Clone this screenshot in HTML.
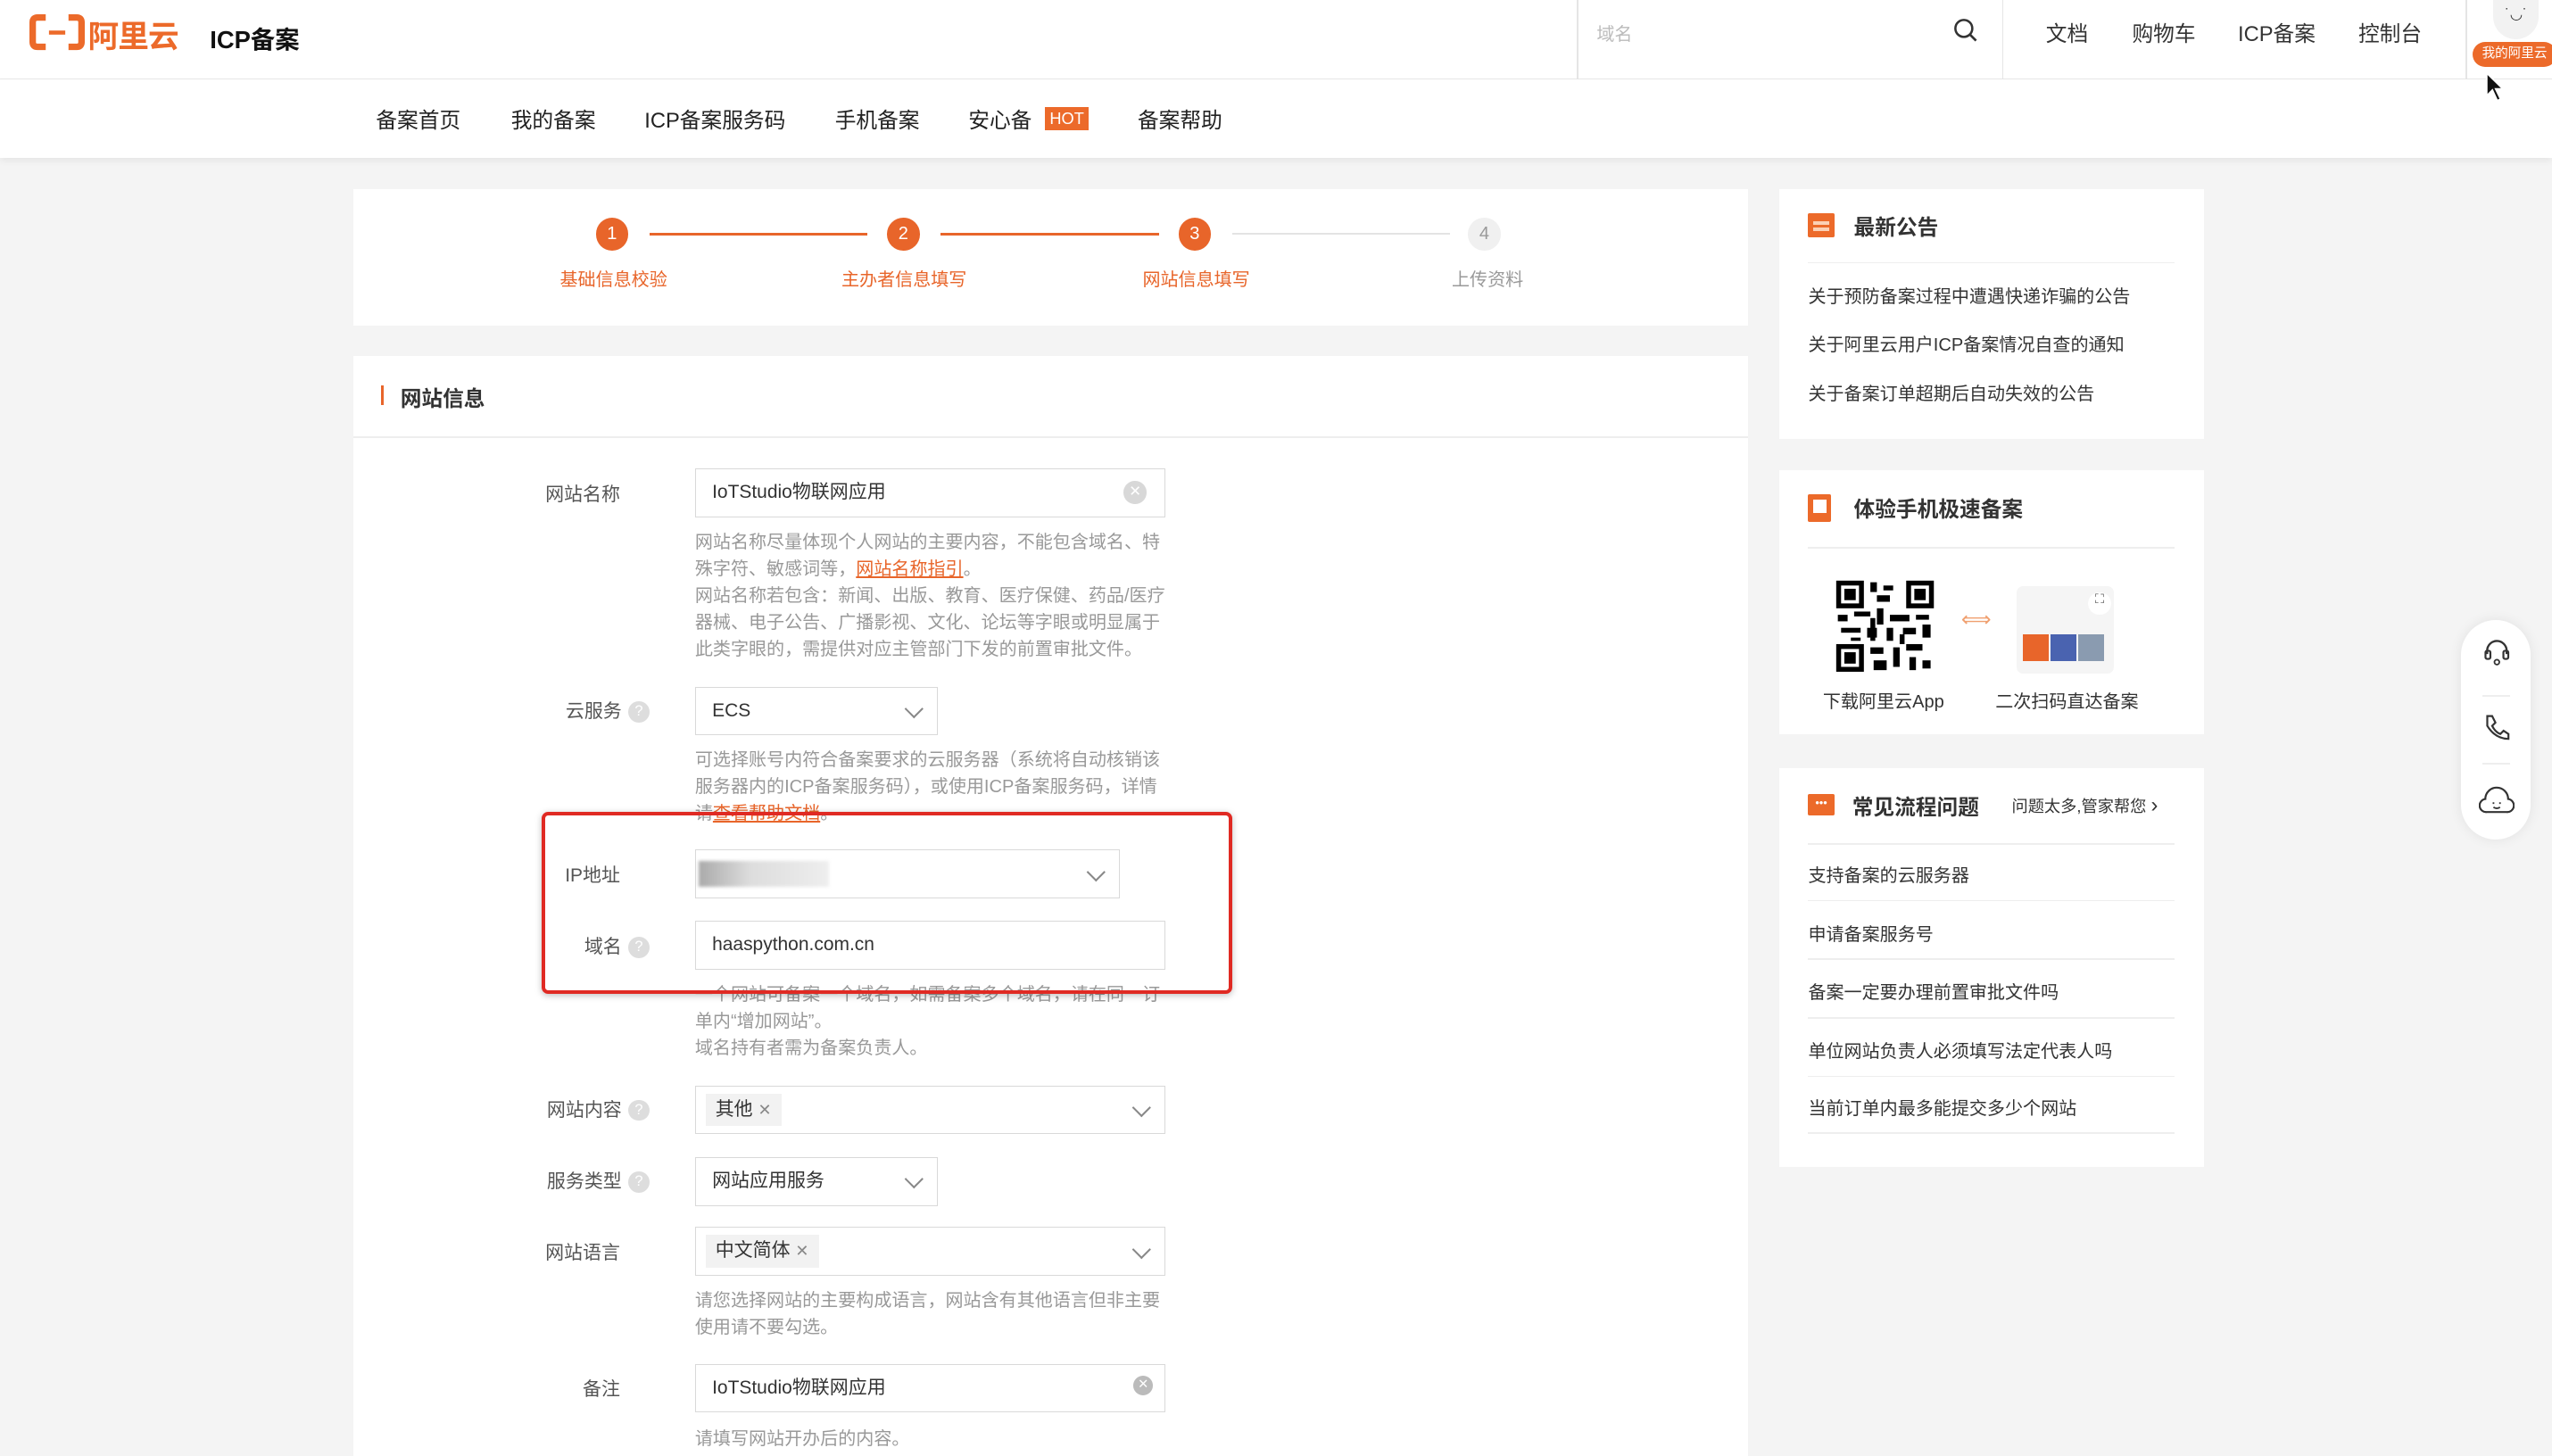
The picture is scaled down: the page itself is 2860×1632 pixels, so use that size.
<!DOCTYPE html>
<html><head><meta charset="utf-8"><style>
*{box-sizing:border-box;margin:0;padding:0}
html,body{width:2860px;height:1632px;overflow:hidden;background:#f4f4f4}
#w{zoom:1.824;width:1568px;height:895px;position:relative;font-family:"Liberation Sans","Noto Sans CJK SC",sans-serif;color:#333;overflow:hidden}
.a{position:absolute;white-space:nowrap}
.or{color:#e8652a}
.card{position:absolute;background:#fff}
.lbl{position:absolute;font-size:11.5px;color:#555;text-align:right;width:120px}
.inp{position:absolute;border:1px solid #d9d9d9;background:#fff;height:30px;font-size:11.5px;color:#333;padding:0 10px;line-height:28px}
.help{position:absolute;font-size:11px;color:#999;line-height:16.5px}
.q{display:inline-block;width:13px;height:13px;border-radius:50%;background:#ddd;color:#fff;font-size:9px;text-align:center;line-height:13px;vertical-align:1px;margin-left:4px}
.chev{position:absolute;right:10px;top:9px;width:8px;height:8px;border-right:1.3px solid #888;border-bottom:1.3px solid #888;transform:rotate(45deg)}
.tag{display:inline-block;background:#f2f2f2;padding:0 6px;height:20px;line-height:20px;font-size:11.5px;margin-top:3px}
.sec{font-size:14px;font-weight:bold;color:#333}
.li{position:absolute;left:18px;font-size:11px;color:#333}
.hr{position:absolute;left:18px;right:18px;height:1px;background:#eee}
</style></head><body><div id="w">
<div class="a" style="left:0;top:0;width:1568px;height:49px;background:#fff;border-bottom:1px solid #e8e8e8"></div>
<svg class="a" style="left:18px;top:9px" width="34" height="22" viewBox="0 0 34 22"><path d="M10 2H5Q2 2 2 5V17Q2 20 5 20H10M24 2H29Q32 2 32 5V17Q32 20 29 20H24" fill="none" stroke="#ec6a2a" stroke-width="4"/><rect x="12" y="10" width="10" height="2.5" fill="#ec6a2a"/></svg>
<div class="a" style="left:54px;top:7px;font-size:19px;color:#ec6a2a;font-weight:bold;letter-spacing:-0.5px">阿里云</div>
<div class="a" style="left:129px;top:12px;font-size:15px;font-weight:bold;color:#111">ICP备案</div>
<div class="a" style="left:969px;top:0;width:1px;height:49px;background:#e5e5e5"></div>
<div class="a" style="left:981px;top:12px;font-size:11px;color:#bbb">域名</div>
<svg class="a" style="left:1200px;top:11px" width="15" height="15"><circle cx="6.5" cy="6.5" r="5.2" fill="none" stroke="#333" stroke-width="1.4"/><path d="M10.3 10.3L14 14" stroke="#333" stroke-width="1.5"/></svg>
<div class="a" style="left:1230px;top:0;width:1px;height:49px;background:#e5e5e5"></div>
<div class="a" style="left:1257px;top:10px;font-size:13px;color:#333">文档</div>
<div class="a" style="left:1310px;top:10px;font-size:13px;color:#333">购物车</div>
<div class="a" style="left:1375px;top:10px;font-size:13px;color:#333">ICP备案</div>
<div class="a" style="left:1449px;top:10px;font-size:13px;color:#333">控制台</div>
<div class="a" style="left:1515px;top:0;width:1px;height:49px;background:#e5e5e5"></div>
<div class="a" style="left:1532px;top:0;width:28px;height:24px;border-radius:0 0 14px 14px;background:#f2f2f2;font-size:9px;text-align:center;line-height:18px;color:#333">˙◡˙</div>
<div class="a" style="left:1519px;top:26px;width:52px;height:15px;border-radius:8px;background:#ec6a2a;color:#fff;font-size:8px;line-height:15px;padding-left:6px">我的阿里云</div>
<div class="a" style="left:0;top:49px;width:1568px;height:48px;background:#fff;box-shadow:0 2px 4px rgba(0,0,0,.06)"></div>
<svg class="a" style="left:1527px;top:44px;z-index:2" width="13" height="20"><path d="M1 1V15L4.5 11.5L7.5 18L9.5 17L6.5 10.8H11Z" fill="#111" stroke="#fff" stroke-width="1"/></svg>
<div class="a" style="left:231px;top:63px;font-size:13px;color:#222">备案首页</div>
<div class="a" style="left:314px;top:63px;font-size:13px;color:#222">我的备案</div>
<div class="a" style="left:396px;top:63px;font-size:13px;color:#222">ICP备案服务码</div>
<div class="a" style="left:513px;top:63px;font-size:13px;color:#222">手机备案</div>
<div class="a" style="left:595px;top:63px;font-size:13px;color:#222">安心备</div>
<div class="a" style="left:642px;top:66px;width:27px;height:14px;background:#ec6a2a;color:#fff;font-size:10px;line-height:14px;text-align:center">HOT</div>
<div class="a" style="left:699px;top:63px;font-size:13px;color:#222">备案帮助</div>
<div class="card" style="left:217px;top:116px;width:857px;height:84px"></div>
<div class="a" style="left:399px;top:143px;width:134px;height:1.5px;background:#e8652a"></div>
<div class="a" style="left:578px;top:143px;width:134px;height:1.5px;background:#e8652a"></div>
<div class="a" style="left:757px;top:143px;width:134px;height:1px;background:#e3e3e3"></div>
<div class="a" style="left:366px;top:134px;width:20px;height:20px;border-radius:50%;background:#e8652a;color:#fff;font-size:11px;text-align:center;line-height:20px">1</div>
<div class="a" style="left:545px;top:134px;width:20px;height:20px;border-radius:50%;background:#e8652a;color:#fff;font-size:11px;text-align:center;line-height:20px">2</div>
<div class="a" style="left:724px;top:134px;width:20px;height:20px;border-radius:50%;background:#e8652a;color:#fff;font-size:11px;text-align:center;line-height:20px">3</div>
<div class="a" style="left:902px;top:134px;width:20px;height:20px;border-radius:50%;background:#f0f0f0;color:#999;font-size:11px;text-align:center;line-height:20px">4</div>
<div class="a or" style="left:344px;top:163px;font-size:11px">基础信息校验</div>
<div class="a or" style="left:517px;top:163px;font-size:11px">主办者信息填写</div>
<div class="a or" style="left:702px;top:163px;font-size:11px">网站信息填写</div>
<div class="a" style="left:892px;top:163px;font-size:11px;color:#999">上传资料</div>
<div class="card" style="left:217px;top:219px;width:857px;height:690px"></div>
<div class="a" style="left:234px;top:237px;width:2px;height:12px;background:#e8652a"></div>
<div class="a sec" style="left:246px;top:234px;font-size:13px">网站信息</div>
<div class="a" style="left:217px;top:268px;width:857px;height:1px;background:#eee"></div>
<div class="lbl" style="left:261px;top:295px">网站名称</div>
<div class="inp" style="left:427px;top:288px;width:289px">IoTStudio物联网应用<span style="position:absolute;right:11px;top:7px;width:14px;height:14px;border-radius:50%;background:#d8d8d8;color:#fff;font-size:9px;line-height:14px;text-align:center">✕</span></div>
<div class="help" style="left:427px;top:325px;width:292px">网站名称尽量体现个人网站的主要内容，不能包含域名、特殊字符、敏感词等，<span class="or" style="text-decoration:underline">网站名称指引</span>。<br>网站名称若包含：新闻、出版、教育、医疗保健、药品/医疗器械、电子公告、广播影视、文化、论坛等字眼或明显属于此类字眼的，需提供对应主管部门下发的前置审批文件。</div>
<div class="lbl" style="left:279px;top:428px">云服务<span class="q">?</span></div>
<div class="inp" style="left:427px;top:422px;width:149px">ECS<span class="chev"></span></div>
<div class="help" style="left:427px;top:459px;width:292px">可选择账号内符合备案要求的云服务器（系统将自动核销该服务器内的ICP备案服务码），或使用ICP备案服务码，详情请<span class="or" style="text-decoration:underline">查看帮助文档</span>。</div>
<div class="lbl" style="left:261px;top:529px">IP地址</div>
<div class="inp" style="left:427px;top:522px;width:261px;padding-left:2px"><span style="display:inline-block;width:80px;height:16px;background:linear-gradient(90deg,#aaa,#ddd 40%,#eee);vertical-align:middle;filter:blur(1px)"></span><span class="chev"></span></div>
<div class="lbl" style="left:279px;top:573px">域名<span class="q">?</span></div>
<div class="inp" style="left:427px;top:566px;width:289px">haaspython.com.cn</div>
<div class="help" style="left:427px;top:603px;width:292px">一个网站可备案一个域名，如需备案多个域名，请在同一订单内“增加网站”。<br>域名持有者需为备案负责人。</div>
<div class="a" style="left:333px;top:499px;width:424px;height:112px;border:2.5px solid #e02a23;border-radius:4px;box-shadow:0 1px 4px rgba(0,0,0,.25)"></div>
<div class="lbl" style="left:279px;top:673px">网站内容<span class="q">?</span></div>
<div class="inp" style="left:427px;top:667px;width:289px;padding-left:6px"><span class="tag">其他 <span style="color:#888;font-size:10px">✕</span></span><span class="chev"></span></div>
<div class="lbl" style="left:279px;top:717px">服务类型<span class="q">?</span></div>
<div class="inp" style="left:427px;top:711px;width:149px">网站应用服务<span class="chev"></span></div>
<div class="lbl" style="left:261px;top:761px">网站语言</div>
<div class="inp" style="left:427px;top:754px;width:289px;padding-left:6px"><span class="tag">中文简体 <span style="color:#888;font-size:10px">✕</span></span><span class="chev"></span></div>
<div class="help" style="left:427px;top:791px;width:292px">请您选择网站的主要构成语言，网站含有其他语言但非主要使用请不要勾选。</div>
<div class="lbl" style="left:261px;top:845px">备注</div>
<div class="inp" style="left:427px;top:838px;width:289px">IoTStudio物联网应用<span style="position:absolute;right:7px;top:7px;width:12px;height:12px;border-radius:50%;background:#bbb;color:#fff;font-size:8px;line-height:12px;text-align:center">✕</span></div>
<div class="help" style="left:427px;top:876px">请填写网站开办后的内容。</div>
<div class="card" style="left:1093px;top:116px;width:261px;height:154px">
 <div class="a" style="left:18px;top:15px;width:16px;height:15px;background:#ec6a2a;border-radius:1px"><div style="margin:5px 3px;height:2px;background:#fbd0b5"></div><div style="margin:-3px 3px;height:2px;background:#fbd0b5"></div></div>
 <div class="a sec" style="left:46px;top:13px;font-size:13px">最新公告</div>
 <div class="hr" style="top:45px"></div>
 <div class="li" style="top:57px">关于预防备案过程中遭遇快递诈骗的公告</div>
 <div class="li" style="top:87px">关于阿里云用户ICP备案情况自查的通知</div>
 <div class="li" style="top:117px">关于备案订单超期后自动失效的公告</div>
</div>
<div class="card" style="left:1093px;top:289px;width:261px;height:162px">
 <div class="a" style="left:18px;top:15px;width:14px;height:17px;background:#ec6a2a;border-radius:1px"><div style="margin:3px 3px;height:8px;background:#fff"></div></div>
 <div class="a sec" style="left:46px;top:13px;font-size:13px">体验手机极速备案</div>
 <div class="hr" style="top:47px"></div>
 <svg class="a" style="left:34px;top:67px" width="62" height="58" viewBox="0 0 62 58"><rect width="62" height="58" fill="#fff"/><g fill="#000"><rect x="1" y="1" width="17" height="17"/><rect x="44" y="1" width="17" height="17"/><rect x="1" y="40" width="17" height="17"/></g><g fill="#fff"><rect x="4" y="4" width="11" height="11"/><rect x="47" y="4" width="11" height="11"/><rect x="4" y="43" width="11" height="11"/></g><g fill="#000"><rect x="6" y="6" width="7" height="7"/><rect x="49" y="6" width="7" height="7"/><rect x="6" y="45" width="7" height="7"/><rect x="22" y="2" width="4" height="6"/><rect x="30" y="4" width="6" height="3"/><rect x="26" y="10" width="8" height="4"/><rect x="2" y="22" width="6" height="4"/><rect x="12" y="20" width="10" height="3"/><rect x="26" y="18" width="4" height="10"/><rect x="34" y="22" width="12" height="4"/><rect x="50" y="22" width="8" height="3"/><rect x="4" y="30" width="12" height="3"/><rect x="20" y="30" width="6" height="6"/><rect x="32" y="30" width="4" height="8"/><rect x="42" y="30" width="8" height="4"/><rect x="54" y="28" width="5" height="8"/><rect x="22" y="42" width="8" height="4"/><rect x="36" y="42" width="4" height="12"/><rect x="44" y="40" width="10" height="4"/><rect x="24" y="50" width="8" height="6"/><rect x="46" y="48" width="4" height="8"/><rect x="54" y="50" width="5" height="5"/><rect x="10" y="36" width="6" height="2"/><rect x="22" y="24" width="3" height="14"/><rect x="40" y="34" width="3" height="6"/></g></svg>
 <div class="a or" style="left:112px;top:84px;font-size:13px;color:#f0a070">⟺</div>
 <div class="a" style="left:146px;top:71px;width:60px;height:54px;background:#f5f5f5;border-radius:4px">
  <div class="a" style="left:4px;top:30px;width:16px;height:16px;background:#e8652a"></div>
  <div class="a" style="left:21px;top:30px;width:16px;height:16px;background:#4a63b0"></div>
  <div class="a" style="left:38px;top:30px;width:16px;height:16px;background:#8a9bb0"></div>
  <div class="a" style="left:44px;top:4px;width:14px;height:14px;border-radius:50%;background:#fff;font-size:8px;text-align:center;color:#555">⛶</div>
 </div>
 <div class="a" style="left:27px;top:133px;font-size:11px;color:#333">下载阿里云App</div>
 <div class="a" style="left:133px;top:133px;font-size:11px;color:#333">二次扫码直达备案</div>
</div>
<div class="card" style="left:1093px;top:472px;width:261px;height:245px">
 <div class="a" style="left:18px;top:16px;width:16px;height:13px;background:#ec6a2a;border-radius:1px;color:#fff;font-size:7px;text-align:center;line-height:11px">•••</div>
 <div class="a sec" style="left:45px;top:13px;font-size:13px">常见流程问题</div>
 <div class="a" style="left:143px;top:16px;font-size:10px;color:#333">问题太多,管家帮您 <span style="font-size:13px">›</span></div>
 <div class="hr" style="top:46px"></div>
 <div class="li" style="top:57px">支持备案的云服务器</div><div class="hr" style="top:81px"></div>
 <div class="li" style="top:93px">申请备案服务号</div><div class="hr" style="top:117px"></div>
 <div class="li" style="top:129px">备案一定要办理前置审批文件吗</div><div class="hr" style="top:153px"></div>
 <div class="li" style="top:165px">单位网站负责人必须填写法定代表人吗</div><div class="hr" style="top:189px"></div>
 <div class="li" style="top:200px">当前订单内最多能提交多少个网站</div><div class="hr" style="top:224px"></div>
</div>
<div class="a" style="left:1512px;top:381px;width:43px;height:135px;border-radius:22px;background:#fff;box-shadow:0 0 8px rgba(0,0,0,.08)">
 <svg class="a" style="left:12px;top:10px" width="20" height="20"><path d="M4 11V9A6 6 0 0 1 16 9V11" fill="none" stroke="#333" stroke-width="1.3"/><rect x="3" y="9" width="3" height="5" rx="1" fill="none" stroke="#333" stroke-width="1.2"/><rect x="14" y="9" width="3" height="5" rx="1" fill="none" stroke="#333" stroke-width="1.2"/><circle cx="10" cy="16" r="1.5" fill="none" stroke="#333"/></svg>
 <div class="a" style="left:13px;top:46px;width:17px;height:1px;background:#eee"></div>
 <svg class="a" style="left:13px;top:57px" width="18" height="18"><path d="M3 2L6 2L8 6L6 8Q8 12 11 13L13 11L16 13V16Q8 16 3 8Z" fill="none" stroke="#333" stroke-width="1.2"/></svg>
 <div class="a" style="left:13px;top:88px;width:17px;height:1px;background:#eee"></div>
 <svg class="a" style="left:11px;top:102px" width="22" height="18"><path d="M5 16H17A4 4 0 0 0 18 8A7 7 0 0 0 4 8A4 4 0 0 0 5 16Z" fill="none" stroke="#333" stroke-width="1.2"/><path d="M9 10V11M13 10V11M9 13Q11 14.5 13 13" stroke="#333" fill="none"/></svg>
</div>
</div></body></html>
